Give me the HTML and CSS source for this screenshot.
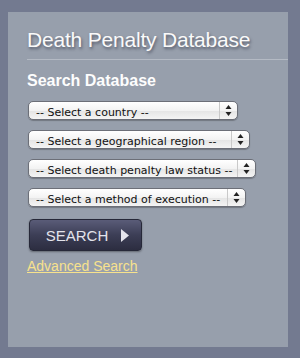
FILE: index.html
```html
<!DOCTYPE html>
<html lang="en">
<head>
<meta charset="UTF-8">
<meta name="viewport" content="width=device-width, initial-scale=1.0">
<title>Death Penalty Database</title>
<link rel="stylesheet" href="styles.css">
</head>
<body>
<div class="panel">
    <h1>Death Penalty Database</h1>
    <form class="search-form">
        <h2>Search Database</h2>
        <div class="picker picker-country">
            <select name="country">
                <option>-- Select a country --</option>
            </select>
            <span class="arrows"><svg width="7" height="11" viewBox="0 0 7 11"><path d="M3.5 0 L6.5 4 L0.5 4 Z M3.5 11 L6.5 7 L0.5 7 Z" fill="#222"/></svg></span>
        </div>
        <div class="picker picker-region">
            <select name="region">
                <option>-- Select a geographical region --</option>
            </select>
            <span class="arrows"><svg width="7" height="11" viewBox="0 0 7 11"><path d="M3.5 0 L6.5 4 L0.5 4 Z M3.5 11 L6.5 7 L0.5 7 Z" fill="#222"/></svg></span>
        </div>
        <div class="picker picker-status">
            <select name="status">
                <option>-- Select death penalty law status --</option>
            </select>
            <span class="arrows"><svg width="7" height="11" viewBox="0 0 7 11"><path d="M3.5 0 L6.5 4 L0.5 4 Z M3.5 11 L6.5 7 L0.5 7 Z" fill="#222"/></svg></span>
        </div>
        <div class="picker picker-method">
            <select name="method">
                <option>-- Select a method of execution --</option>
            </select>
            <span class="arrows"><svg width="7" height="11" viewBox="0 0 7 11"><path d="M3.5 0 L6.5 4 L0.5 4 Z M3.5 11 L6.5 7 L0.5 7 Z" fill="#222"/></svg></span>
        </div>
        <button type="submit" class="search-btn">SEARCH <svg width="8" height="13" viewBox="0 0 8 13"><path d="M0 0 L8 6.5 L0 13 Z" fill="#e4e4ec"/></svg></button>
        <a href="#" class="advanced">Advanced Search</a>
    </form>
</div>
</body>
</html>
```

FILE: styles.css
```css
/* page */
body {
    margin: 0;
    padding: 12px 12px 11px 8px;
    background-color: #737a90;
    font-family: "Liberation Sans", Arial, sans-serif;
}
.panel {
    width: 280px;
    height: 335px;
    box-sizing: border-box;
    background-color: #979fac;
    padding: 15px 0 0 19px;
}
h1 {
    margin: 0;
    font-weight: normal;
    font-size: 21px;
    line-height: 26px;
    color: #fafafa;
    text-shadow: 1px 2px 3px rgba(40, 44, 60, 0.6);
    padding-bottom: 6px;
    border-bottom: 1px solid #b4bac4;
    letter-spacing: -0.2px;
}
h2 {
    margin: 12px 0 11px;
    font-size: 16px;
    line-height: 18px;
    color: #fdfdfd;
}
.search-form {
    display: flex;
    flex-direction: column;
    align-items: flex-start;
}
/* mac style pop-up menus */
.picker {
    position: relative;
    height: 19px;
    margin: 0 0 10px 1px;
    border: 1px solid #6c6f78;
    border-radius: 5px;
    background: linear-gradient(#ffffff, #f3f3f3 50%, #e4e4e4 51%, #f4f4f4);
    box-shadow: 0 1px 1px rgba(0, 0, 0, 0.25);
    box-sizing: border-box;
}
.picker-country { width: 210px; }
.picker-region { width: 222px; }
.picker-status { width: 228px; }
.picker-method { width: 218px; }
.picker select {
    appearance: none;
    -webkit-appearance: none;
    border: none;
    background: transparent;
    width: 100%;
    height: 17px;
    padding: 0 0 0 7px;
    font-family: "DejaVu Sans", sans-serif;
    font-size: 11px;
    color: #111;
    outline: none;
}
.arrows {
    position: absolute;
    right: 0;
    top: 0;
    width: 17px;
    height: 17px;
    border-left: 1px solid #c9c9c9;
    display: flex;
    align-items: center;
    justify-content: center;
}
.search-btn {
    margin: 2px 0 7px 2px;
    width: 113px;
    height: 32px;
    border: 1px solid #262838;
    border-radius: 4px;
    background: linear-gradient(#5a5c78, #3c3e56 50%, #2c2d40);
    box-shadow: 0 1px 2px rgba(0, 0, 0, 0.35);
    color: #e4e4ec;
    font-family: "Liberation Sans", sans-serif;
    font-size: 15px;
    display: flex;
    align-items: center;
    justify-content: center;
    gap: 13px;
    padding: 0 0 0 4px;
}
.advanced {
    color: #f7e28c;
    font-size: 14px;
    line-height: 16px;
}
```
